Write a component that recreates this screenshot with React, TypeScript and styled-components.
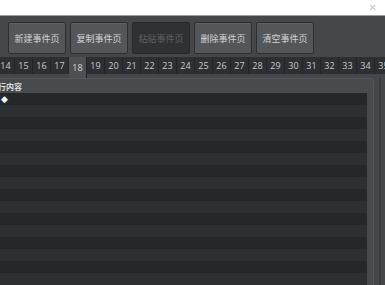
import React from "react";
import styled, { createGlobalStyle } from "styled-components";

const GlobalStyle = createGlobalStyle`
  html, body {
    margin: 0;
    padding: 0;
    background: #ffffff;
  }
  body {
    font-family: "Noto Sans CJK SC", "Noto Sans", sans-serif;
  }
`;

const Window = styled.div`
  display: flex;
  flex-direction: column;
  width: 385px;
  height: 285px;
  overflow: hidden;
`;

const TitleBar = styled.div`
  display: flex;
  align-items: center;
  justify-content: flex-end;
  height: 15px;
  padding-right: 8px;
  background: #ffffff;
  border-bottom: 1px solid #9c9c9c;
`;

const CloseMark = styled.span`
  color: #c4c4c4;
  font-family: "DejaVu Sans", sans-serif;
  font-size: 10px;
  line-height: 1;
`;

const Main = styled.div`
  flex: 1;
  display: flex;
  flex-direction: column;
  min-height: 0;
  background: #45484b;
`;

const Toolbar = styled.div`
  display: flex;
  gap: 4px;
  padding: 6px 0 0 8px;
`;

const ActionButton = styled.button<{ $disabled?: boolean }>`
  width: 58px;
  height: 32px;
  padding: 0;
  border-radius: 2px;
  border: 1px solid ${(p) => (p.$disabled ? "#26292b" : "#2c2f31")};
  background: ${(p) => (p.$disabled ? "#2f3235" : "#54575a")};
  box-shadow: ${(p) =>
    p.$disabled ? "none" : "inset 0 1px 0 rgba(255,255,255,0.06)"};
  color: ${(p) => (p.$disabled ? "#5d6063" : "#d2d3d4")};
  font-family: "Noto Sans CJK SC", sans-serif;
  font-size: 9px;
  cursor: default;
`;

const TabBar = styled.div`
  display: flex;
  margin: 3px 0 0 -3px;
  height: 17px;
  background: #2b2e31;
`;

const Tab = styled.div<{ $active?: boolean }>`
  flex: 0 0 18px;
  display: flex;
  align-items: center;
  justify-content: center;
  box-sizing: border-box;
  border-right: 1px solid #222527;
  background: ${(p) => (p.$active ? "#4d5053" : "#2d3033")};
  color: ${(p) => (p.$active ? "#d6d7d8" : "#c9cacb")};
  font-family: "Open Sans", "DejaVu Sans", sans-serif;
  font-size: 9px;
  margin-bottom: ${(p) => (p.$active ? "-4px" : "0")};
`;

const Body = styled.div`
  flex: 1;
  display: flex;
  min-height: 0;
  margin-top: 4px;
`;

const Panel = styled.div`
  flex: 0 0 374px;
  display: flex;
  flex-direction: column;
  box-sizing: border-box;
  padding-right: 6px;
  border-top: 1px solid #55585b;
  border-right: 1px solid #55585b;
  border-top-right-radius: 4px;
  background: #484b4e;
  overflow: hidden;
`;

const PanelHeader = styled.div`
  height: 14px;
  display: flex;
  align-items: center;
  overflow: hidden;
  flex: 0 0 auto;
`;

const HeaderText = styled.span`
  margin-left: -10px;
  color: #dcdddd;
  font-size: 8px;
  font-weight: 700;
  white-space: nowrap;
`;

const Rows = styled.div`
  flex: 1;
  display: flex;
  flex-direction: column;
  background: #25282b;
`;

const Row = styled.div<{ $alt?: boolean }>`
  flex: 0 0 12px;
  display: flex;
  align-items: center;
  background: ${(p) => (p.$alt ? "#2d3033" : "#25282b")};
`;

const Marker = styled.span`
  margin-left: 1px;
  color: #f2f2f2;
  font-family: "DejaVu Sans", sans-serif;
  font-size: 9px;
  line-height: 1;
`;

const Gutter = styled.div`
  flex: 1;
  display: flex;
  justify-content: center;
  background: #45484b;
`;

const GutterLine = styled.div`
  width: 2px;
  margin-left: 1px;
  background: #393c3f;
`;

const buttons = ["新建事件页", "复制事件页", "粘贴事件页", "删除事件页", "清空事件页"];
const tabs = Array.from({ length: 22 }, (_, i) => 14 + i);

export default function App() {
  return (
    <Window>
      <GlobalStyle />
      <TitleBar>
        <CloseMark>✕</CloseMark>
      </TitleBar>
      <Main>
        <Toolbar>
          {buttons.map((b) => (
            <ActionButton key={b} $disabled={b === "粘贴事件页"}>
              {b}
            </ActionButton>
          ))}
        </Toolbar>
        <TabBar>
          {tabs.map((t) => (
            <Tab key={t} $active={t === 18}>
              {t}
            </Tab>
          ))}
        </TabBar>
        <Body>
          <Panel>
            <PanelHeader>
              <HeaderText>执行内容</HeaderText>
            </PanelHeader>
            <Rows>
              {Array.from({ length: 16 }, (_, i) => (
                <Row key={i} $alt={i % 2 === 1}>
                  {i === 0 && <Marker>◆</Marker>}
                </Row>
              ))}
            </Rows>
          </Panel>
          <Gutter>
            <GutterLine />
          </Gutter>
        </Body>
      </Main>
    </Window>
  );
}
